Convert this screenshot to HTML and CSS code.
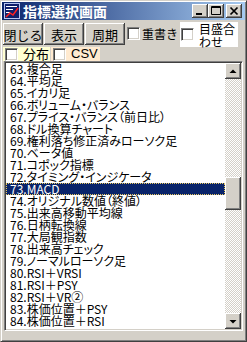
FILE: index.html
```html
<!DOCTYPE html>
<html lang="ja">
<head>
	<meta charset="UTF-8">
	<title>指標選択画面</title>
	<link rel="stylesheet" href="styles.css">
</head>
<body>
	<div class="win">
		<div class="title">
			<svg class="icon" width="16" height="16" viewBox="0 0 16 16">
				<rect x="0.5" y="0.5" width="15" height="15" fill="#10206a" stroke="#b8c4f0"/>
				<path d="M2 3.5h11M2 6.5h7M2 9.5h4" stroke="#fff"/>
				<polyline points="2,14 6,10 9,12 14,5" fill="none" stroke="#ff2020" stroke-width="1.5"/>
			</svg>
			<span class="caption">指標選択画面</span>
			<div class="tbtns">
				<span class="tbtn">
					<svg width="16" height="14" viewBox="0 0 16 14"><rect x="4" y="9" width="6" height="2"/></svg>
				</span>
				<span class="tbtn">
					<svg width="16" height="14" viewBox="0 0 16 14"><path d="M3.5 2.5h9v8h-9z M3 3.5h10" fill="none" stroke="#000"/></svg>
				</span>
				<span class="tbtn close">
					<svg width="16" height="14" viewBox="0 0 16 14"><path d="M4.5 3.5l7 7M11.5 3.5l-7 7" stroke="#000" stroke-width="1.7"/></svg>
				</span>
			</div>
		</div>

		<div class="toolbar">
			<button class="btn">閉じる</button>
			<button class="btn">表示</button>
			<button class="btn">周期</button>
			<label class="chk over"><span class="box"></span>重書き</label>
			<label class="chk scale"><span class="box"></span><span>目盛合<br>わせ</span></label>
		</div>

		<div class="opts">
			<label class="chk dist"><span class="box"></span>分布</label>
			<label class="chk csv"><span class="box"></span>CSV</label>
		</div>

		<div class="list">
			<ul class="items">
				<li>63.複合足</li>
				<li>64.平均足</li>
				<li>65.イカリ足</li>
				<li>66.ボリューム・バランス</li>
				<li>67.プライス・バランス（前日比）</li>
				<li>68.ドル換算チャート</li>
				<li>69.権利落ち修正済みローソク足</li>
				<li>70.ベータ値</li>
				<li>71.コポック指標</li>
				<li>72.タイミング・インジケータ</li>
				<li class="sel">73.MACD</li>
				<li>74.オリジナル数値（終値）</li>
				<li>75.出来高移動平均線</li>
				<li>76.日柄転換線</li>
				<li>77.大局観指数</li>
				<li>78.出来高チェック</li>
				<li>79.ノーマルローソク足</li>
				<li>80.RSI＋VRSI</li>
				<li>81.RSI＋PSY</li>
				<li>82.RSI＋VR②</li>
				<li>83.株価位置＋PSY</li>
				<li>84.株価位置＋RSI</li>
			</ul>
			<div class="scroll">
				<span class="sbtn">
					<svg width="16" height="16" viewBox="0 0 16 16"><polygon points="4.5,10 8,6.5 11.5,10"/></svg>
				</span>
				<div class="track"><span class="thumb"></span></div>
				<span class="sbtn">
					<svg width="16" height="16" viewBox="0 0 16 16"><polygon points="4.5,7 8,10.5 11.5,7"/></svg>
				</span>
			</div>
		</div>
	</div>
</body>
</html>
```

FILE: styles.css
```css
body {
	margin: 0;
	font-family: "Noto Sans CJK JP", "Liberation Sans", sans-serif;
	font-size: 12px;
	color: #000;
}

.win {
	width: 247px;
	height: 342px;
	box-sizing: border-box;
	padding: 1px;
	background: #d4d0c8;
	border: 1px solid;
	border-color: #d4d0c8 #404040 #404040 #d4d0c8;
	box-shadow: inset 1px 1px #fff, inset -1px -1px #808080;
	display: flex;
	flex-direction: column;
}

/* title bar */
.title {
	height: 18px;
	display: flex;
	align-items: center;
	padding: 0 3px 0 2px;
	background: linear-gradient(to right, #0a246a, #a6caf0);
}

.icon {
	display: block;
	margin-right: 3px;
}

.caption {
	color: #fff;
	font-weight: bold;
	font-size: 14px;
	line-height: 18px;
}

.tbtns {
	margin-left: auto;
	display: flex;
}

.tbtn,
.sbtn,
.thumb,
.btn {
	background: #d4d0c8;
	box-shadow: inset -1px -1px #404040, inset 1px 1px #fff, inset -2px -2px #808080, inset 2px 2px #d4d0c8;
}

.tbtn {
	width: 16px;
	height: 14px;
}

.tbtn svg,
.sbtn svg {
	display: block;
}

.tbtn.close {
	margin-left: 2px;
}

/* toolbar */
.toolbar {
	height: 27px;
	display: flex;
	padding-left: 1px;
}

.btn {
	width: 40px;
	height: 22px;
	margin: 3px 1px 0 0;
	padding: 0;
	border: 0;
	font-family: inherit;
	font-size: 13px;
	color: #000;
}

.chk {
	display: flex;
	align-items: center;
	gap: 3px;
	white-space: nowrap;
}

.box {
	width: 13px;
	height: 13px;
	box-sizing: border-box;
	background: #fff;
	border: 1px solid;
	border-color: #808080 #fff #fff #808080;
	box-shadow: inset 1px 1px #404040, inset -1px -1px #d4d0c8;
	flex: none;
}

.over {
	width: 53px;
	margin-left: 1px;
	gap: 2px;
}

.scale {
	width: 57px;
	height: 25px;
	margin-top: 2px;
	padding-left: 1px;
	gap: 5px;
	background: #fff;
	line-height: 13px;
}

/* second row */
.opts {
	height: 14px;
	display: flex;
	padding-left: 1px;
}

.opts .chk {
	padding-left: 2px;
	gap: 5px;
	font-size: 13px;
	line-height: 14px;
}

.dist {
	width: 45px;
	margin-right: 1px;
	background: #ffffd2;
}

.csv {
	width: 47px;
	background: #ffead0;
	font-family: "Liberation Sans", sans-serif;
}

/* list box */
.list {
	height: 270px;
	margin: 0 2px;
	box-sizing: border-box;
	padding: 1px;
	border: 1px solid;
	border-color: #808080 #fff #fff #808080;
	box-shadow: inset 1px 1px #404040, inset -1px -1px #d4d0c8;
	display: flex;
}

.items {
	flex: 1;
	margin: 0;
	padding: 0;
	list-style: none;
	background: #fff;
	overflow: hidden;
	font-feature-settings: "palt";
}

.items li {
	height: 12px;
	line-height: 12px;
	padding-left: 4px;
	white-space: nowrap;
}

.items li.sel {
	background: #0a246a;
	color: #fff;
	outline: 1px dotted #e8c860;
	outline-offset: -1px;
}

.scroll {
	width: 16px;
	display: flex;
	flex-direction: column;
}

.sbtn {
	height: 16px;
}

.track {
	flex: 1;
	padding-top: 98px;
	background: repeating-conic-gradient(#d4d0c8 0 25%, #fff 0 50%) 0 0 / 2px 2px;
}

.thumb {
	display: block;
	height: 33px;
}
```
